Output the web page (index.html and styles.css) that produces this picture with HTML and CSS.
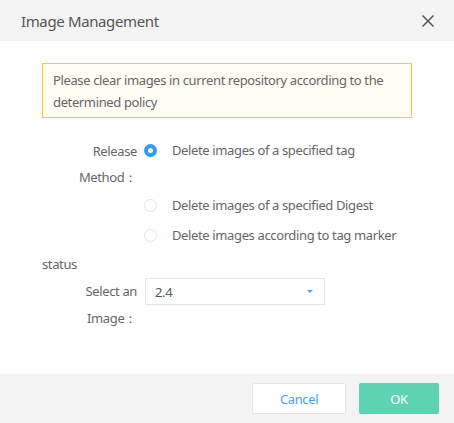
FILE: index.html
```html
<!DOCTYPE html>
<html>
<head>
<meta charset="utf-8">
<link rel="stylesheet" href="styles.css">
</head>
<body>
<div class="dialog">
  <div class="dialog-header">
    <span class="dialog-title">Image Management</span>
    <button class="close-btn" aria-label="Close">
      <svg width="12" height="12" viewBox="0 0 12 12"><path d="M0.5 0.5 L11.5 11.5 M11.5 0.5 L0.5 11.5" stroke="#555" stroke-width="1.5" fill="none"/></svg>
    </button>
  </div>
  <div class="dialog-body">
    <div class="alert">Please clear images in current repository according to the determined policy</div>
    <div class="form-item">
      <div class="form-label radio-label">Release Method：</div>
      <div class="radio-group">
        <label class="radio first"><span class="radio-dot checked"></span><span>Delete images of a specified tag</span></label>
        <label class="radio"><span class="radio-dot"></span><span>Delete images of a specified Digest</span></label>
        <label class="radio"><span class="radio-dot"></span><span>Delete images according to tag marker</span></label>
      </div>
    </div>
    <div class="status">status</div>
    <div class="form-item">
      <div class="form-label select-label">Select an Image：</div>
      <div class="select">
        <span>2.4</span>
        <span class="arrow"></span>
      </div>
    </div>
  </div>
  <div class="dialog-footer">
    <button class="btn btn-cancel">Cancel</button>
    <button class="btn btn-ok">OK</button>
  </div>
</div>
</body>
</html>
```
FILE: styles.css
```css
* { box-sizing: border-box; }
html, body {
  margin: 0;
  padding: 0;
  background: #fff;
}
body {
  font-family: "Noto Sans", "Open Sans", "Liberation Sans", sans-serif;
  color: #666;
  font-size: 13px;
  letter-spacing: -0.37px;
  width: 454px;
  height: 423px;
  overflow: hidden;
}
.dialog {
  display: flex;
  flex-direction: column;
  height: 423px;
}
.dialog-header {
  height: 41px;
  background: #f3f3f3;
  display: flex;
  align-items: center;
  justify-content: space-between;
  padding: 0 20px 0 21px;
}
.dialog-title {
  font-size: 15px;
  color: #555;
}
.close-btn {
  border: 0;
  background: none;
  padding: 0;
  width: 13px;
  height: 13px;
  display: flex;
  align-items: center;
  justify-content: center;
}
.dialog-body {
  flex: 1;
  padding: 22px 42px 0 42px;
}
.alert {
  background: #fffcf4;
  border: 1px solid #fbc447;
  padding: 5px 10px;
  line-height: 22px;
  height: 55px;
  margin-bottom: 20px;
}
.form-item {
  display: flex;
  align-items: flex-start;
}
.form-label {
  width: 95px;
  text-align: right;
  flex: none;
}
.radio-label {
  line-height: 26px;
  padding-left: 36px;
}
.select-label {
  line-height: 27px;
  padding-left: 40px;
}
.radio-group {
  display: flex;
  flex-direction: column;
  padding-left: 7px;
}
.radio {
  display: flex;
  align-items: center;
  height: 30px;
  gap: 15px;
}
.radio.first {
  height: 52px;
  align-items: flex-start;
  padding-top: 6px;
}
.radio.first span:last-child { line-height: 14px; margin-top: -1px; }
.radio-dot {
  width: 13px;
  height: 13px;
  border-radius: 50%;
  border: 1px solid #dfe5ec;
  background: #fff;
  flex: none;
}
.radio-dot.checked {
  border: 4px solid #2f9bf6;
  background: #fff;
}
.status {
  line-height: 28px;
  height: 28px;
}
.select {
  margin-left: 8px;
  width: 180px;
  height: 27px;
  border: 1px solid #e3e3e3;
  display: flex;
  align-items: center;
  justify-content: space-between;
  padding: 0 11px 0 9px;
  color: #555;
}
.arrow {
  width: 0;
  height: 0;
  border-left: 3px solid transparent;
  border-right: 3px solid transparent;
  border-top: 3px solid #3aa6f9;
}
.dialog-footer {
  height: 49px;
  background: #f3f3f3;
  display: flex;
  justify-content: flex-end;
  align-items: center;
  gap: 13px;
  padding: 0 15px 0 0;
}
.btn {
  height: 31px;
  font-family: inherit;
  font-size: 13px;
  letter-spacing: inherit;
  border-radius: 2px;
  cursor: pointer;
}
.btn-cancel {
  width: 94px;
  background: #fff;
  border: 1px solid #dde6ef;
  color: #3f9ff3;
}
.btn-ok {
  width: 80px;
  background: #5dd3b3;
  border: 0;
  color: #fff;
}
```
